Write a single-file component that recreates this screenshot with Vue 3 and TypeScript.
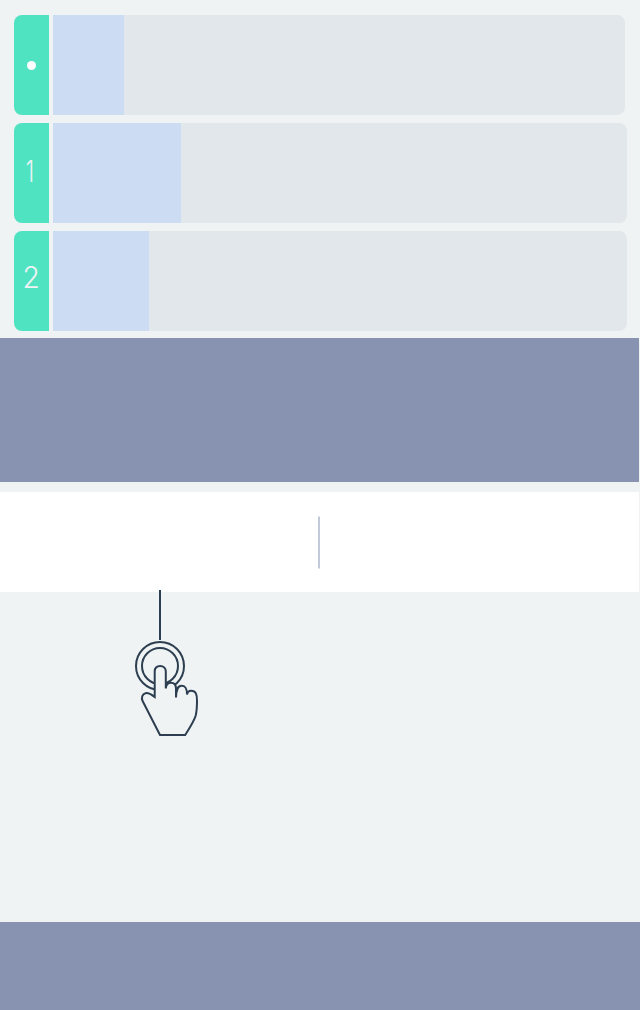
<script setup lang="ts">
interface Row {
  label: string
  filled: number
  total: number
}

const rows: Row[] = [
  { label: '', filled: 71, total: 572 },
  { label: '1', filled: 128, total: 574 },
  { label: '2', filled: 96, total: 574 },
]
</script>

<template>
  <main class="screen">
    <section class="rows">
      <div v-for="(row, i) in rows" :key="i" class="row">
        <div class="tab">
          <span v-if="row.label" class="digit" :class="'digit-' + row.label">{{ row.label }}</span>
          <span v-else class="dot"></span>
        </div>
        <div class="track" :style="{ width: row.total + 'px' }">
          <div class="fill" :style="{ width: row.filled + 'px' }"></div>
        </div>
      </div>
    </section>
    <section class="banner"></section>
    <section class="panel">
      <span class="divider"></span>
    </section>
    <section class="hint">
      <svg class="tap" viewBox="130 590 72 150" width="72" height="150" fill="none" stroke="#2c3e50" stroke-width="2">
        <path d="M160 590V640" />
        <circle cx="160" cy="666" r="24" />
        <circle cx="160" cy="666" r="18" />
        <path
          fill="#eff3f4"
          d="M154.7 697V671.5C154.7 668 157 666 160.2 666S165.8 668 165.8 671.5V688.5C166 685 168 682.8 171 682.8C174.5 682.8 176 685.5 176 689V697.5C176.3 690 177.3 685.8 181.4 685.8C185.3 685.8 187 687.8 187 694.5C187.4 692 188.6 690.7 191 690.7C196 690.7 197 694.5 197 701C197 706 196.8 711 195.7 715.5C194 721.5 189 729 185.2 734.9H160L142.6 701C141 697.8 142.4 694 145.6 693.2C148.8 692.4 152 695 154.7 697Z"
        />
      </svg>
    </section>
    <footer class="footer"></footer>
  </main>
</template>

<style>
body {
  margin: 0;
  background: #eff3f4;
}
</style>

<style scoped>
.screen {
  width: 640px;
  height: 1010px;
  display: flex;
  flex-direction: column;
  background: #eff3f4;
  overflow: hidden;
}
.rows {
  display: flex;
  flex-direction: column;
  gap: 8px;
  padding: 15px 0 7px 14px;
}
.row {
  display: flex;
  gap: 4px;
  height: 100px;
}
.tab {
  width: 35px;
  display: flex;
  justify-content: center;
  background: #50e3c2;
  border-radius: 8px 0 0 8px;
}
.dot {
  width: 9px;
  height: 9px;
  margin-top: 46px;
  border-radius: 50%;
  background: #fff;
}
.digit {
  height: 36px;
  font: 300 30px/36px Inter, 'Liberation Sans', sans-serif;
  color: #eff3f4;
}
.digit-1 {
  margin: 30px 3px 0 0;
  transform: scaleX(0.7);
}
.digit-2 {
  margin: 28px 0 0;
  transform: scaleX(0.94);
}
.track {
  background: #e2e7eb;
  border-radius: 0 8px 8px 0;
}
.fill {
  height: 100%;
  background: #ccdcf3;
}
.banner {
  width: 639px;
  height: 144px;
  background: #8893b1;
}
.panel {
  width: 639px;
  height: 100px;
  margin-top: 10px;
  display: flex;
  justify-content: center;
  background: #fff;
}
.divider {
  width: 2px;
  height: 53px;
  margin: 24px 0 0 -1px;
  background: linear-gradient(#e2e4ed 1px, #c4c9da 1px, #c4c9da 52px, #e2e4ed 52px);
}
.hint {
  height: 330px;
}
.tap {
  display: block;
  margin: -2px 0 0 130px;
}
.footer {
  height: 88px;
  background: #8893b1;
}
</style>
